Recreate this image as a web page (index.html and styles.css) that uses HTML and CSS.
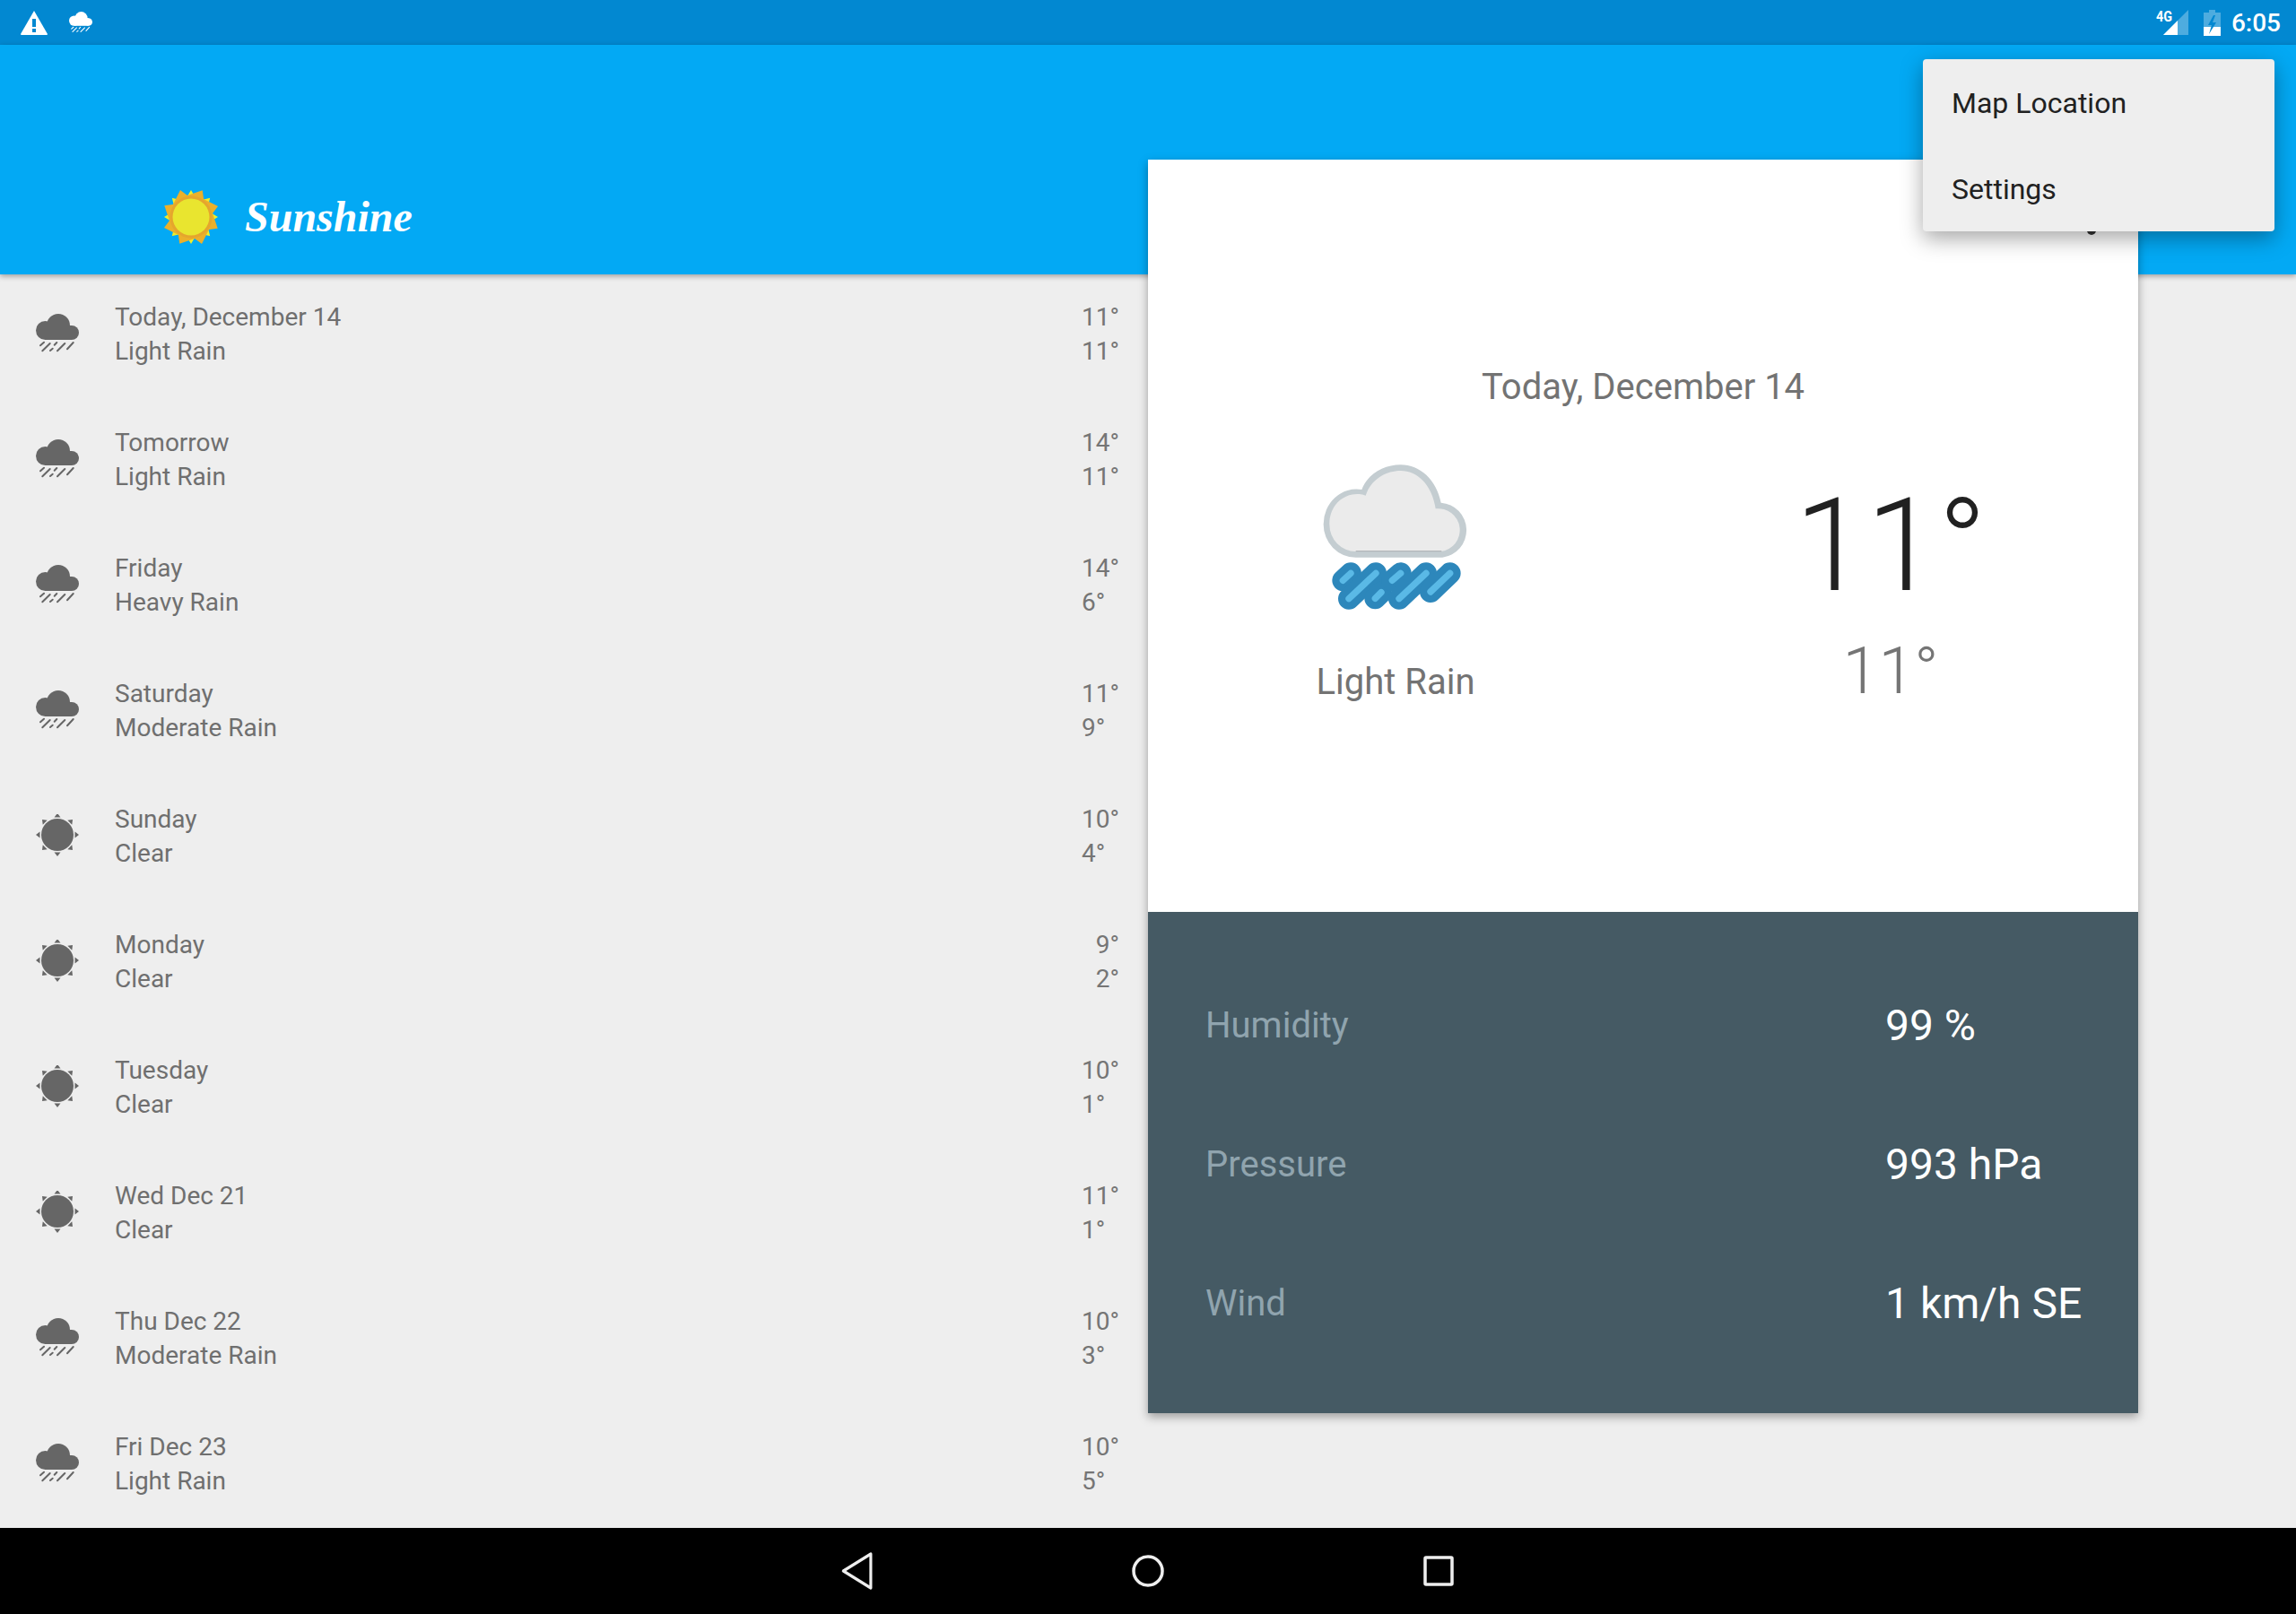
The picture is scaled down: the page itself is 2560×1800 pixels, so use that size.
FILE: index.html
```html
<!DOCTYPE html>
<html>
  <head>
    <title>Sunshine</title>
    <link rel="stylesheet" href="styles.css">
  </head>
  <body>
    <svg class="icon-defs" width="0" height="0">
      <defs>
        <symbol id="icon-rain" viewBox="0 0 48 48">
          <circle cx="10.5" cy="20.5" r="10.5" fill="currentColor" />
          <circle cx="25" cy="15" r="13" fill="currentColor" />
          <circle cx="40" cy="23" r="8" fill="currentColor" />
          <rect x="10" y="15" width="30" height="16" fill="currentColor" />
          <g stroke="currentColor" stroke-width="2" stroke-linecap="round">
            <line x1="5" y1="37.3" x2="9" y2="33.7" />
            <line x1="7.3" y1="43.3" x2="15.7" y2="35" />
            <line x1="16" y1="43" x2="18.7" y2="40.7" />
            <line x1="20.7" y1="36.7" x2="23.3" y2="34" />
            <line x1="24" y1="43.3" x2="32.3" y2="35" />
            <line x1="35" y1="41.3" x2="41.7" y2="34" />
          </g>
        </symbol>
        <symbol id="icon-clear" viewBox="0 0 48 48">
          <circle cx="24" cy="23" r="18" fill="currentColor" />
          <g fill="currentColor">
            <polygon id="ray" points="24,-1 27.5,3.5 20.5,3.5" />
            <use href="#ray" transform="rotate(45 24 23)" />
            <use href="#ray" transform="rotate(90 24 23)" />
            <use href="#ray" transform="rotate(135 24 23)" />
            <use href="#ray" transform="rotate(180 24 23)" />
            <use href="#ray" transform="rotate(225 24 23)" />
            <use href="#ray" transform="rotate(270 24 23)" />
            <use href="#ray" transform="rotate(315 24 23)" />
          </g>
        </symbol>
      </defs>
    </svg>

    <div class="screen">
      <div class="status-bar">
        <svg class="status-warning" viewBox="0 0 30 27">
          <path d="M15 0 L30 26 Q30 27 29 27 L1 27 Q0 27 0 26 Z" fill="#fff" />
          <rect x="13" y="9" width="4" height="9" fill="#0288d1" />
          <rect x="13" y="20" width="4" height="4" fill="#0288d1" />
        </svg>
        <svg class="status-rain"><use href="#icon-rain" /></svg>
        <div class="status-right">
          <svg class="status-signal" viewBox="0 0 36 28">
            <polygon points="36,0 36,28 8,28" fill="#fff" opacity="0.3" />
            <polygon points="8,28 24,28 24,12" fill="#fff" />
            <text x="0" y="13" class="signal-text" textLength="18" lengthAdjust="spacingAndGlyphs">4G</text>
          </svg>
          <svg class="status-battery" viewBox="0 0 19 29">
            <path d="M6 0 H13 V3 H19 V29 H0 V3 H6 Z" fill="#fff" opacity="0.3" />
            <path d="M0 19 H19 V29 H0 Z" fill="#fff" />
            <polygon points="11,6 5,17 9,17 6,27 14,14 10,14 13,6" fill="#0288d1" />
          </svg>
          <span class="status-time">6:05</span>
        </div>
      </div>

      <div class="app-bar">
        <svg class="logo-sun" viewBox="-32 -32 64 64">
          <g fill="#f0ee2a">
            <polygon id="yray" points="0,-30 6,-20 -6,-20" />
            <use href="#yray" transform="rotate(45)" />
            <use href="#yray" transform="rotate(90)" />
            <use href="#yray" transform="rotate(135)" />
            <use href="#yray" transform="rotate(180)" />
            <use href="#yray" transform="rotate(225)" />
            <use href="#yray" transform="rotate(270)" />
            <use href="#yray" transform="rotate(315)" />
          </g>
          <g fill="#ebb02b">
            <polygon id="oray" points="-12,-30 0,-21 -21,-12" />
            <use href="#oray" transform="rotate(45)" />
            <use href="#oray" transform="rotate(90)" />
            <use href="#oray" transform="rotate(135)" />
            <use href="#oray" transform="rotate(180)" />
            <use href="#oray" transform="rotate(225)" />
            <use href="#oray" transform="rotate(270)" />
            <use href="#oray" transform="rotate(315)" />
          </g>
          <circle r="23.5" fill="#e5a62d" />
          <circle r="20.5" fill="#e9e52f" />
        </svg>
        <span class="app-title">Sunshine</span>
      </div>

      <div class="main">
        <div class="forecast-list">
          <div class="forecast-row">
            <svg class="forecast-icon"><use href="#icon-rain" /></svg>
            <div class="forecast-text"><div>Today, December 14</div><div>Light Rain</div></div>
            <div class="forecast-temp"><div class="temp-max">11°</div><div>11°</div></div>
          </div>
          <div class="forecast-row">
            <svg class="forecast-icon"><use href="#icon-rain" /></svg>
            <div class="forecast-text"><div>Tomorrow</div><div>Light Rain</div></div>
            <div class="forecast-temp"><div class="temp-max">14°</div><div>11°</div></div>
          </div>
          <div class="forecast-row">
            <svg class="forecast-icon"><use href="#icon-rain" /></svg>
            <div class="forecast-text"><div>Friday</div><div>Heavy Rain</div></div>
            <div class="forecast-temp"><div class="temp-max">14°</div><div>6°</div></div>
          </div>
          <div class="forecast-row">
            <svg class="forecast-icon"><use href="#icon-rain" /></svg>
            <div class="forecast-text"><div>Saturday</div><div>Moderate Rain</div></div>
            <div class="forecast-temp"><div class="temp-max">11°</div><div>9°</div></div>
          </div>
          <div class="forecast-row">
            <svg class="forecast-icon"><use href="#icon-clear" /></svg>
            <div class="forecast-text"><div>Sunday</div><div>Clear</div></div>
            <div class="forecast-temp"><div class="temp-max">10°</div><div>4°</div></div>
          </div>
          <div class="forecast-row">
            <svg class="forecast-icon"><use href="#icon-clear" /></svg>
            <div class="forecast-text"><div>Monday</div><div>Clear</div></div>
            <div class="forecast-temp"><div class="temp-max">9°</div><div>2°</div></div>
          </div>
          <div class="forecast-row">
            <svg class="forecast-icon"><use href="#icon-clear" /></svg>
            <div class="forecast-text"><div>Tuesday</div><div>Clear</div></div>
            <div class="forecast-temp"><div class="temp-max">10°</div><div>1°</div></div>
          </div>
          <div class="forecast-row">
            <svg class="forecast-icon"><use href="#icon-clear" /></svg>
            <div class="forecast-text"><div>Wed Dec 21</div><div>Clear</div></div>
            <div class="forecast-temp"><div class="temp-max">11°</div><div>1°</div></div>
          </div>
          <div class="forecast-row">
            <svg class="forecast-icon"><use href="#icon-rain" /></svg>
            <div class="forecast-text"><div>Thu Dec 22</div><div>Moderate Rain</div></div>
            <div class="forecast-temp"><div class="temp-max">10°</div><div>3°</div></div>
          </div>
          <div class="forecast-row">
            <svg class="forecast-icon"><use href="#icon-rain" /></svg>
            <div class="forecast-text"><div>Fri Dec 23</div><div>Light Rain</div></div>
            <div class="forecast-temp"><div class="temp-max">10°</div><div>5°</div></div>
          </div>
        </div>

        <div class="detail-card">
          <div class="detail-top">
            <div class="overflow-dot"></div>
            <div class="detail-date">Today, December 14</div>
            <div class="detail-columns">
              <div class="detail-col">
                <svg class="detail-art" viewBox="108 30 600 600">
                  <path d="M275 395 A108 110 0 0 1 167 285 A110 117 0 0 1 295 168 C315 115 370 85 425 85 C490 85 545 135 560 212 A92 92 0 0 1 565 395 Z" fill="#c4cdd1" />
                  <path d="M275 375 A88 90 0 0 1 187 285 A92 97 0 0 1 308 188 C325 135 375 105 425 105 C480 105 530 150 542 232 A72 72 0 0 1 560 375 Z" fill="#ebebeb" />
                  <line x1="275" y1="374" x2="562" y2="374" stroke="#a9aeb0" stroke-width="3" />
                  <g fill="none" stroke="#2d87bb" stroke-width="72" stroke-linecap="round">
                    <line x1="232" y1="472" x2="258" y2="448" />
                    <line x1="252" y1="533" x2="342" y2="448" />
                    <line x1="340" y1="532" x2="360" y2="512" />
                    <line x1="397" y1="472" x2="425" y2="448" />
                    <line x1="420" y1="533" x2="510" y2="448" />
                    <line x1="525" y1="510" x2="590" y2="448" />
                  </g>
                  <g fill="none" stroke="#5ab9e6" stroke-width="22" stroke-linecap="round">
                    <line x1="232" y1="472" x2="258" y2="448" />
                    <line x1="252" y1="533" x2="342" y2="448" />
                    <line x1="340" y1="532" x2="360" y2="512" />
                    <line x1="397" y1="472" x2="425" y2="448" />
                    <line x1="420" y1="533" x2="510" y2="448" />
                    <line x1="525" y1="510" x2="590" y2="448" />
                  </g>
                </svg>
                <div class="detail-desc">Light Rain</div>
              </div>
              <div class="detail-col">
                <div class="temp-high">11°</div>
                <div class="temp-low">11°</div>
              </div>
            </div>
          </div>
          <div class="detail-bottom">
            <div class="extra-label">Humidity</div>
            <div class="extra-value">99 %</div>
            <div class="extra-label">Pressure</div>
            <div class="extra-value">993 hPa</div>
            <div class="extra-label">Wind</div>
            <div class="extra-value">1 km/h SE</div>
          </div>
        </div>
      </div>

      <div class="nav-bar">
        <svg class="nav-icon" viewBox="0 0 48 48">
          <path d="M7 24 L41 5 V43 Z" transform="translate(2 0) scale(0.9 1)" />
        </svg>
        <svg class="nav-icon" viewBox="0 0 48 48">
          <circle cx="24" cy="24" r="16" />
        </svg>
        <svg class="nav-icon" viewBox="0 0 48 48">
          <rect x="9" y="9" width="30" height="30" rx="1" />
        </svg>
      </div>

      <div class="popup-menu">
        <div class="popup-item">Map Location</div>
        <div class="popup-item">Settings</div>
      </div>
    </div>
  </body>
</html>
```

FILE: styles.css
```css
* {
  box-sizing: border-box;
}

body {
  margin: 0;
  font-family: "Roboto", sans-serif;
  background-color: #eeeeee;
  overflow: hidden;
}

.icon-defs {
  position: absolute;
}

.screen {
  position: relative;
  width: 2560px;
  height: 1800px;
  display: flex;
  flex-direction: column;
  overflow: hidden;
}

/* status bar */
.status-bar {
  height: 50px;
  flex: none;
  display: flex;
  align-items: center;
  padding-left: 23px;
  background-color: #0288d1;
}

.status-warning {
  width: 30px;
  height: 27px;
}

.status-rain {
  width: 26px;
  height: 26px;
  margin-left: 24px;
  color: #fff;
}

.status-right {
  margin-left: auto;
  display: flex;
  align-items: center;
  padding-right: 17px;
}

.status-signal {
  width: 36px;
  height: 28px;
  overflow: visible;
}

.signal-text {
  font-size: 16px;
  font-weight: 700;
  fill: #fff;
}

.status-battery {
  width: 19px;
  height: 29px;
  margin-left: 17px;
}

.status-time {
  margin-left: 12px;
  font-size: 28px;
  font-weight: 500;
  color: #fff;
}

/* app bar */
.app-bar {
  position: relative;
  height: 256px;
  flex: none;
  display: flex;
  align-items: flex-end;
  padding: 0 0 32px 181px;
  background-color: #03a9f4;
  box-shadow: 0 2px 6px rgba(0, 0, 0, 0.35);
  z-index: 1;
}

.logo-sun {
  width: 64px;
  height: 64px;
}

.app-title {
  margin-left: 28px;
  font-family: "Liberation Serif", serif;
  font-style: italic;
  font-weight: 700;
  font-size: 48px;
  line-height: 64px;
  color: #fff;
}

/* main area */
.main {
  flex: 1;
  min-height: 0;
  display: flex;
}

.forecast-list {
  width: 1280px;
  overflow: hidden;
}

.forecast-row {
  height: 140px;
  display: flex;
  align-items: center;
  padding: 0 32px 6px 40px;
  font-size: 28px;
  line-height: 38px;
}

.forecast-icon {
  width: 48px;
  height: 48px;
  margin-bottom: 2px;
  color: #666666;
}

.forecast-text {
  flex: 1;
  margin-left: 40px;
  color: #6f6f6f;
}

.forecast-temp {
  color: #757575;
}

.temp-max {
  text-align: right;
}

/* detail card */
.detail-card {
  position: relative;
  z-index: 2;
  width: 1104px;
  height: 1398px;
  margin-top: -128px;
  display: flex;
  flex-direction: column;
  box-shadow: 0 4px 10px rgba(0, 0, 0, 0.35);
}

.detail-top {
  position: relative;
  height: 839px;
  flex: none;
  padding-top: 230px;
  background-color: #fff;
}

.overflow-dot {
  position: absolute;
  top: 74px;
  left: 1047px;
  width: 10px;
  height: 10px;
  border-radius: 50%;
  background-color: #333333;
}

.detail-date {
  text-align: center;
  font-size: 40px;
  line-height: 48px;
  color: #737373;
}

.detail-columns {
  display: grid;
  grid-template-columns: 1fr 1fr;
  margin-top: 44px;
}

.detail-col {
  display: flex;
  flex-direction: column;
  align-items: center;
}

.detail-art {
  width: 200px;
  height: 200px;
}

.detail-desc {
  margin-top: 37px;
  font-size: 40px;
  line-height: 48px;
  color: #737373;
}

.temp-high {
  margin-top: 24px;
  font-size: 144px;
  font-weight: 300;
  line-height: 170px;
  color: #212121;
}

.temp-low {
  margin-top: 10px;
  font-size: 72px;
  font-weight: 300;
  line-height: 90px;
  color: #757575;
}

.detail-bottom {
  flex: 1;
  display: grid;
  grid-template-columns: 758px 1fr;
  grid-auto-rows: 155px;
  align-content: center;
  align-items: center;
  padding: 3px 0 0 64px;
  font-size: 40px;
  background-color: #455a64;
}

.extra-label {
  color: #90a4ae;
}

.extra-value {
  font-size: 48px;
  color: #fff;
}

/* nav bar */
.nav-bar {
  position: relative;
  z-index: 3;
  height: 96px;
  flex: none;
  display: flex;
  align-items: center;
  justify-content: center;
  gap: 276px;
  background-color: #000;
}

.nav-icon {
  width: 48px;
  height: 48px;
  fill: none;
  stroke: #eeeeee;
  stroke-width: 3.5;
  stroke-linejoin: round;
}

/* overflow menu */
.popup-menu {
  position: absolute;
  z-index: 4;
  top: 66px;
  left: 2144px;
  width: 392px;
  height: 192px;
  padding-top: 1px;
  border-radius: 4px;
  background-color: #eeeeee;
  box-shadow: 0 8px 24px rgba(0, 0, 0, 0.35);
}

.popup-item {
  height: 96px;
  display: flex;
  align-items: center;
  padding-left: 32px;
  font-size: 32px;
  color: #212121;
}
```
